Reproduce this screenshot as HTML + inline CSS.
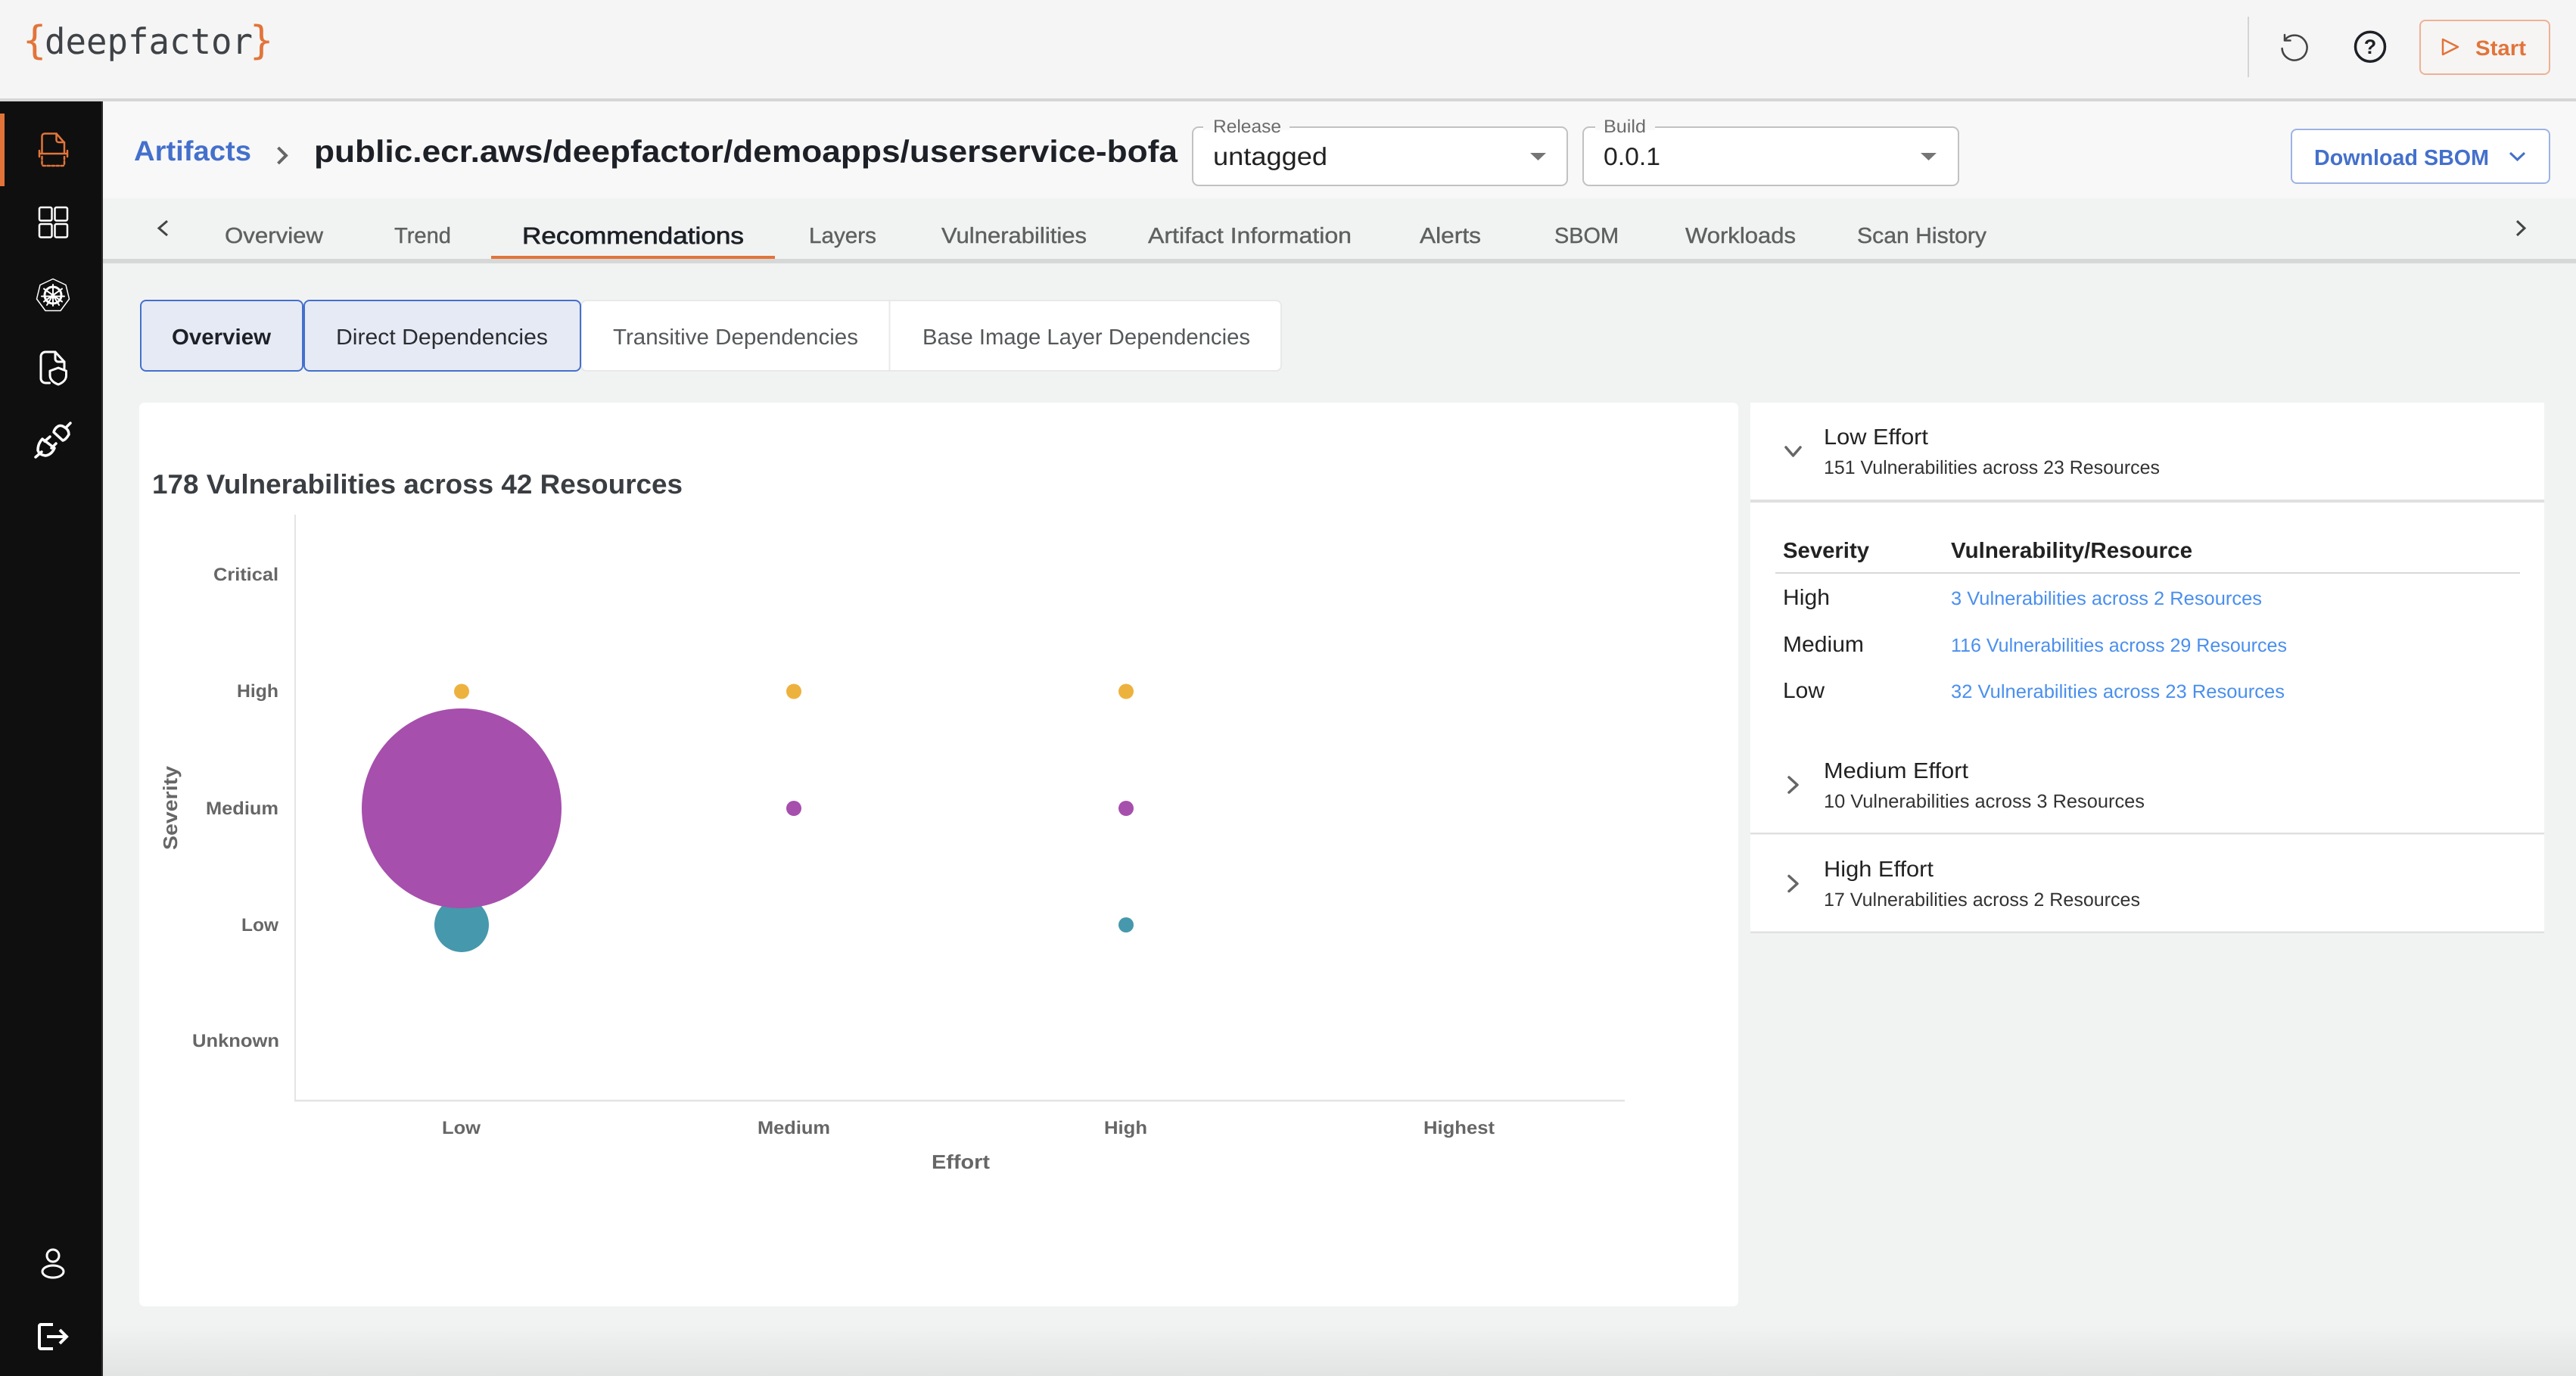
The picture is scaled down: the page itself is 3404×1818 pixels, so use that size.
<!DOCTYPE html>
<html lang="en">
<head>
<meta charset="utf-8">
<title>deepfactor - Recommendations</title>
<style>
html,body{margin:0;padding:0;width:3404px;height:1818px;overflow:hidden;background:#f1f3f3}
svg{display:block}
text{font-family:"Liberation Sans",sans-serif;text-rendering:geometricPrecision}
.b{font-weight:700}
.tab{font-size:29px;fill:#5f6161;stroke:#5f6161;stroke-width:.4}
.tick{font-size:24px;font-weight:700;fill:#666}
.axis{font-size:26px;font-weight:700;fill:#666}
.h{font-size:29px;fill:#222}
.s{font-size:25px;fill:#333}
.l{font-size:25px;fill:#4a8fee}
.ic{fill:none;stroke:#fff;stroke-width:3;stroke-linecap:round;stroke-linejoin:round}
.ch{fill:none;stroke:#666;stroke-width:3.5;stroke-linecap:round;stroke-linejoin:round}
.mono{font-family:"DejaVu Sans Mono",monospace}
</style>
</head>
<body>
<svg xmlns="http://www.w3.org/2000/svg" width="3404" height="1818" viewBox="0 0 3404 1818">
<defs>
<linearGradient id="fade" x1="0" y1="0" x2="0" y2="1">
<stop offset="0" stop-color="#f1f3f3"/>
<stop offset="1" stop-color="#e2e4e3"/>
</linearGradient>
</defs>
<!-- backgrounds -->
<rect width="3404" height="1818" fill="#f1f3f3"/>
<rect x="136" y="1750" width="3268" height="68" fill="url(#fade)"/>
<rect width="3404" height="130" fill="#f5f5f5"/>
<rect y="130" width="3404" height="4" fill="#d6d6d6"/>
<rect x="136" y="134" width="3268" height="128" fill="#f8f8f8"/>
<rect x="136" y="342" width="3268" height="6" fill="#d6d8d8"/>

<!-- logo -->
<text class="mono" x="30" y="71" font-size="52" fill="#e2743a">{</text>
<text class="mono" x="59" y="71" font-size="47" fill="#3f4347" textLength="275" lengthAdjust="spacingAndGlyphs">deepfactor</text>
<text class="mono" x="330" y="71" font-size="52" fill="#e2743a">}</text>

<!-- header right -->
<rect x="2970" y="22" width="2" height="80" fill="#d4d4d4"/>
<g fill="none" stroke="#444" stroke-width="2.500" stroke-linecap="round" stroke-linejoin="round">
<path d="M3019 53A16.500 16.500 0 1 1 3015.600 64"/>
<path d="M3019 46V53.500H3026.500"/>
</g>
<circle cx="3132" cy="61.700" r="19.500" fill="none" stroke="#1d2026" stroke-width="3.500"/>
<text x="3132" y="71" font-size="27" class="b" fill="#1d2026" text-anchor="middle">?</text>
<rect x="3198" y="27" width="171" height="71" rx="7" fill="#f6f5f4" stroke="#efb194" stroke-width="2"/>
<path d="M3228 52L3248 62L3228 72Z" fill="none" stroke="#e2743a" stroke-width="2.500" stroke-linejoin="round"/>
<text x="3271" y="73" font-size="28" class="b" fill="#e2743a" textLength="67" lengthAdjust="spacingAndGlyphs">Start</text>

<!-- sidebar -->
<rect y="134" width="134" height="1684" fill="#0f0f0f"/>
<rect x="134" y="134" width="2" height="1684" fill="#2c2c2c"/>
<rect y="150" width="6" height="96" fill="#e2743a"/>
<g fill="none" stroke="#e2743a" stroke-width="2.500" stroke-linecap="round" stroke-linejoin="round">
<path d="M55.500 202V180a3.500 3.500 0 0 1 3.500-3.500H74.500L85 188.500V202"/>
<path d="M74.500 176.500V185a3 3 0 0 0 3 3H85"/>
<path d="M52 203H89M52 199v8M89 199v8"/>
<path d="M55.500 207V217a2 2 0 0 0 2 2H83a2 2 0 0 0 2-2V207" stroke-dasharray="3.500 2.500"/>
</g>
<g class="ic" style="stroke-width:2.500">
<rect x="52" y="274" width="16.500" height="17.500" rx="2"/><rect x="72.500" y="274" width="16.500" height="17.500" rx="2"/>
<rect x="52" y="296" width="16.500" height="17.500" rx="2"/><rect x="72.500" y="296" width="16.500" height="17.500" rx="2"/>
</g>
<g fill="none" stroke="#fff" stroke-linecap="round" stroke-linejoin="round">
<path d="M70 368.500L87 376.500L91.500 395L80 410.500L60 410.500L48.500 395L53 376.500Z" stroke-width="1.500"/>
<circle cx="70" cy="390" r="11" stroke-width="3"/>
<circle cx="70" cy="390" r="2.500" fill="#fff" stroke="none"/>
<path d="M70 376V404M58 381.500L82 398.500M82 381.500L58 398.500M55 391.500H85M62 403L70 390L78 403" stroke-width="2"/>
</g>
<g class="ic">
<path d="M65.500 506H60a6 6 0 0 1-6-6V471a6 6 0 0 1 6-6H73L85 478V487"/>
<path d="M73 465V474a4 4 0 0 0 4 4H85"/>
<path d="M77 486L87.500 490V496C87.500 502 82.500 506 77 508C71.500 506 66 502 66 496V490Z"/>
</g>
<g class="ic" style="stroke-width:3.500">
<path d="M47 604L55 597"/>
<path d="M56 580L72 592Q68 601 60 602Q52 601 50 595Q50 586 56 580Z"/>
<path d="M59 583L66 577M68 592L74 586"/>
<path d="M71 571L83 582Q87 581 91 574Q91 568 86 565Q81 561 77 563Q72 566 71 571Z"/>
<path d="M87 565L93 559"/>
</g>
<g class="ic">
<circle cx="70" cy="1659" r="8"/>
<ellipse cx="70" cy="1680" rx="14" ry="8"/>
</g>
<g class="ic" style="stroke-width:4;stroke-linecap:butt;stroke-linejoin:miter">
<path d="M70 1750H54A2 2 0 0 0 52 1752V1780A2 2 0 0 0 54 1782H70"/>
<path d="M62 1766H86"/>
<path d="M79 1757L88 1766L79 1775"/>
</g>

<!-- breadcrumb -->
<text x="177" y="212" font-size="37" class="b" fill="#4470cc" textLength="155" lengthAdjust="spacingAndGlyphs">Artifacts</text>
<path d="M367.500 195L378 205.500L367.500 216" fill="none" stroke="#666" stroke-width="4"/>
<text x="415" y="214" font-size="41" class="b" fill="#1d2026" textLength="1141" lengthAdjust="spacingAndGlyphs">public.ecr.aws/deepfactor/demoapps/userservice-bofa</text>

<!-- Release select -->
<rect x="1576" y="168" width="495" height="77" rx="8" fill="#fff" stroke="#c2c2c2" stroke-width="2"/>
<rect x="1590" y="160" width="114" height="12" fill="#f8f8f8"/>
<text x="1603" y="175" font-size="24" fill="#6b6b6b" textLength="90" lengthAdjust="spacingAndGlyphs">Release</text>
<text x="1603" y="218" font-size="33" fill="#222" textLength="151" lengthAdjust="spacingAndGlyphs">untagged</text>
<path d="M2022 202H2043L2032.500 212Z" fill="#757575"/>

<!-- Build select -->
<rect x="2092" y="168" width="496" height="77" rx="8" fill="#fff" stroke="#c2c2c2" stroke-width="2"/>
<rect x="2108" y="160" width="79" height="12" fill="#f8f8f8"/>
<text x="2119" y="175" font-size="24" fill="#6b6b6b" textLength="56" lengthAdjust="spacingAndGlyphs">Build</text>
<text x="2119" y="218" font-size="33" fill="#222" textLength="75" lengthAdjust="spacingAndGlyphs">0.0.1</text>
<path d="M2538 202H2559L2548.500 212Z" fill="#757575"/>

<!-- Download -->
<rect x="3028" y="171" width="341" height="71" rx="7" fill="#fff" stroke="#9db3e5" stroke-width="2"/>
<text x="3058" y="218" font-size="29" class="b" fill="#4470cc" textLength="231" lengthAdjust="spacingAndGlyphs">Download SBOM</text>
<path d="M3317 202L3326.500 211L3336 202" fill="none" stroke="#4470cc" stroke-width="3"/>

<!-- tabs -->
<path d="M221 292L210 301.500L221 311" fill="none" stroke="#444" stroke-width="3"/>
<text class="tab" x="297" y="321" textLength="130" lengthAdjust="spacingAndGlyphs">Overview</text>
<text class="tab" x="521" y="321" textLength="75" lengthAdjust="spacingAndGlyphs">Trend</text>
<text x="690" y="322" font-size="31" fill="#1d2026" stroke="#1d2026" stroke-width=".7" textLength="293" lengthAdjust="spacingAndGlyphs">Recommendations</text>
<rect x="649" y="338" width="375" height="4" fill="#e2743a"/>
<text class="tab" x="1069" y="321" textLength="89" lengthAdjust="spacingAndGlyphs">Layers</text>
<text class="tab" x="1244" y="321" textLength="192" lengthAdjust="spacingAndGlyphs">Vulnerabilities</text>
<text class="tab" x="1517" y="321" textLength="269" lengthAdjust="spacingAndGlyphs">Artifact Information</text>
<text class="tab" x="1876" y="321" textLength="81" lengthAdjust="spacingAndGlyphs">Alerts</text>
<text class="tab" x="2054" y="321" textLength="85" lengthAdjust="spacingAndGlyphs">SBOM</text>
<text class="tab" x="2227" y="321" textLength="146" lengthAdjust="spacingAndGlyphs">Workloads</text>
<text class="tab" x="2454" y="321" textLength="171" lengthAdjust="spacingAndGlyphs">Scan History</text>
<path d="M3326 292L3336 301.500L3326 311" fill="none" stroke="#444" stroke-width="3"/>

<!-- toggle group -->
<rect x="768" y="397" width="925" height="93" rx="7" fill="#fff" stroke="#e8e8e8" stroke-width="2"/>
<rect x="1174.500" y="397" width="2" height="93" fill="#e8e8e8"/>
<rect x="186" y="397" width="214" height="93" rx="7" fill="#e6eaf5" stroke="#4470cc" stroke-width="2"/>
<rect x="402" y="397" width="365" height="93" rx="7" fill="#e6eaf5" stroke="#4470cc" stroke-width="2"/>
<text x="227" y="455" font-size="29" class="b" fill="#1d2026" textLength="131" lengthAdjust="spacingAndGlyphs">Overview</text>
<text x="444" y="455" font-size="29" fill="#2a2c30" textLength="280" lengthAdjust="spacingAndGlyphs">Direct Dependencies</text>
<text x="810" y="455" font-size="29" fill="#55585a" textLength="324" lengthAdjust="spacingAndGlyphs">Transitive Dependencies</text>
<text x="1219" y="455" font-size="29" fill="#55585a" textLength="433" lengthAdjust="spacingAndGlyphs">Base Image Layer Dependencies</text>

<!-- chart card -->
<rect x="184" y="532" width="2113" height="1194" rx="7" fill="#fff"/>
<text x="201" y="652" font-size="36" class="b" fill="#3a3e42" textLength="701" lengthAdjust="spacingAndGlyphs">178 Vulnerabilities across 42 Resources</text>
<rect x="389" y="680" width="2" height="775" fill="#e4e4e4"/>
<rect x="389" y="1453" width="1758" height="2.500" fill="#e4e4e4"/>
<text class="tick" x="282" y="767" textLength="86" lengthAdjust="spacingAndGlyphs">Critical</text>
<text class="tick" x="313" y="921" textLength="55" lengthAdjust="spacingAndGlyphs">High</text>
<text class="tick" x="272" y="1076" textLength="96" lengthAdjust="spacingAndGlyphs">Medium</text>
<text class="tick" x="319" y="1230" textLength="49" lengthAdjust="spacingAndGlyphs">Low</text>
<text class="tick" x="254" y="1383" textLength="115" lengthAdjust="spacingAndGlyphs">Unknown</text>
<text class="axis" transform="translate(234 1123) rotate(-90)" textLength="111" lengthAdjust="spacingAndGlyphs">Severity</text>
<text class="tick" x="584" y="1498" textLength="51" lengthAdjust="spacingAndGlyphs">Low</text>
<text class="tick" x="1001" y="1498" textLength="96" lengthAdjust="spacingAndGlyphs">Medium</text>
<text class="tick" x="1459" y="1498" textLength="57" lengthAdjust="spacingAndGlyphs">High</text>
<text class="tick" x="1881" y="1498" textLength="94" lengthAdjust="spacingAndGlyphs">Highest</text>
<text class="axis" x="1231" y="1544" font-size="27" textLength="77" lengthAdjust="spacingAndGlyphs">Effort</text>
<circle cx="610" cy="1222" r="36" fill="#4698ac"/>
<circle cx="610" cy="1068" r="132" fill="#a64fad"/>
<circle cx="610" cy="913.500" r="10" fill="#edb23e"/>
<circle cx="1049" cy="913.500" r="10" fill="#edb23e"/>
<circle cx="1488" cy="913.500" r="10" fill="#edb23e"/>
<circle cx="1049" cy="1068" r="10" fill="#a64fad"/>
<circle cx="1488" cy="1068" r="10" fill="#a64fad"/>
<circle cx="1488" cy="1222" r="10" fill="#4698ac"/>

<!-- right panel -->
<rect x="2313" y="532" width="1049" height="700" fill="#fff"/>
<rect x="2313" y="660" width="1049" height="4" fill="#e0e0e0"/>
<rect x="2313" y="1100" width="1049" height="2.500" fill="#e0e0e0"/>
<rect x="2313" y="1230.500" width="1049" height="2.500" fill="#e0e0e0"/>

<path class="ch" d="M2360 591L2369.500 602L2379 591"/>
<text class="h" x="2410" y="587" textLength="138" lengthAdjust="spacingAndGlyphs">Low Effort</text>
<text class="s" x="2410" y="626" textLength="444" lengthAdjust="spacingAndGlyphs">151 Vulnerabilities across 23 Resources</text>

<text class="h b" x="2356" y="737" textLength="114" lengthAdjust="spacingAndGlyphs">Severity</text>
<text class="h b" x="2578" y="737" textLength="319" lengthAdjust="spacingAndGlyphs">Vulnerability/Resource</text>
<rect x="2346" y="756" width="984" height="2" fill="#d8d8d8"/>
<text class="h" x="2356" y="799" textLength="62" lengthAdjust="spacingAndGlyphs">High</text>
<text class="l" x="2578" y="799" textLength="411" lengthAdjust="spacingAndGlyphs">3 Vulnerabilities across 2 Resources</text>
<text class="h" x="2356" y="861" textLength="107" lengthAdjust="spacingAndGlyphs">Medium</text>
<text class="l" x="2578" y="861" textLength="444" lengthAdjust="spacingAndGlyphs">116 Vulnerabilities across 29 Resources</text>
<text class="h" x="2356" y="922" textLength="55" lengthAdjust="spacingAndGlyphs">Low</text>
<text class="l" x="2578" y="922" textLength="441" lengthAdjust="spacingAndGlyphs">32 Vulnerabilities across 23 Resources</text>

<path class="ch" d="M2364 1027L2375 1037L2364 1047"/>
<text class="h" x="2410" y="1028" textLength="191" lengthAdjust="spacingAndGlyphs">Medium Effort</text>
<text class="s" x="2410" y="1067" textLength="424" lengthAdjust="spacingAndGlyphs">10 Vulnerabilities across 3 Resources</text>

<path class="ch" d="M2364 1157.500L2375 1167.500L2364 1177.500"/>
<text class="h" x="2410" y="1158" textLength="145" lengthAdjust="spacingAndGlyphs">High Effort</text>
<text class="s" x="2410" y="1197" textLength="418" lengthAdjust="spacingAndGlyphs">17 Vulnerabilities across 2 Resources</text>
</svg>
</body>
</html>
